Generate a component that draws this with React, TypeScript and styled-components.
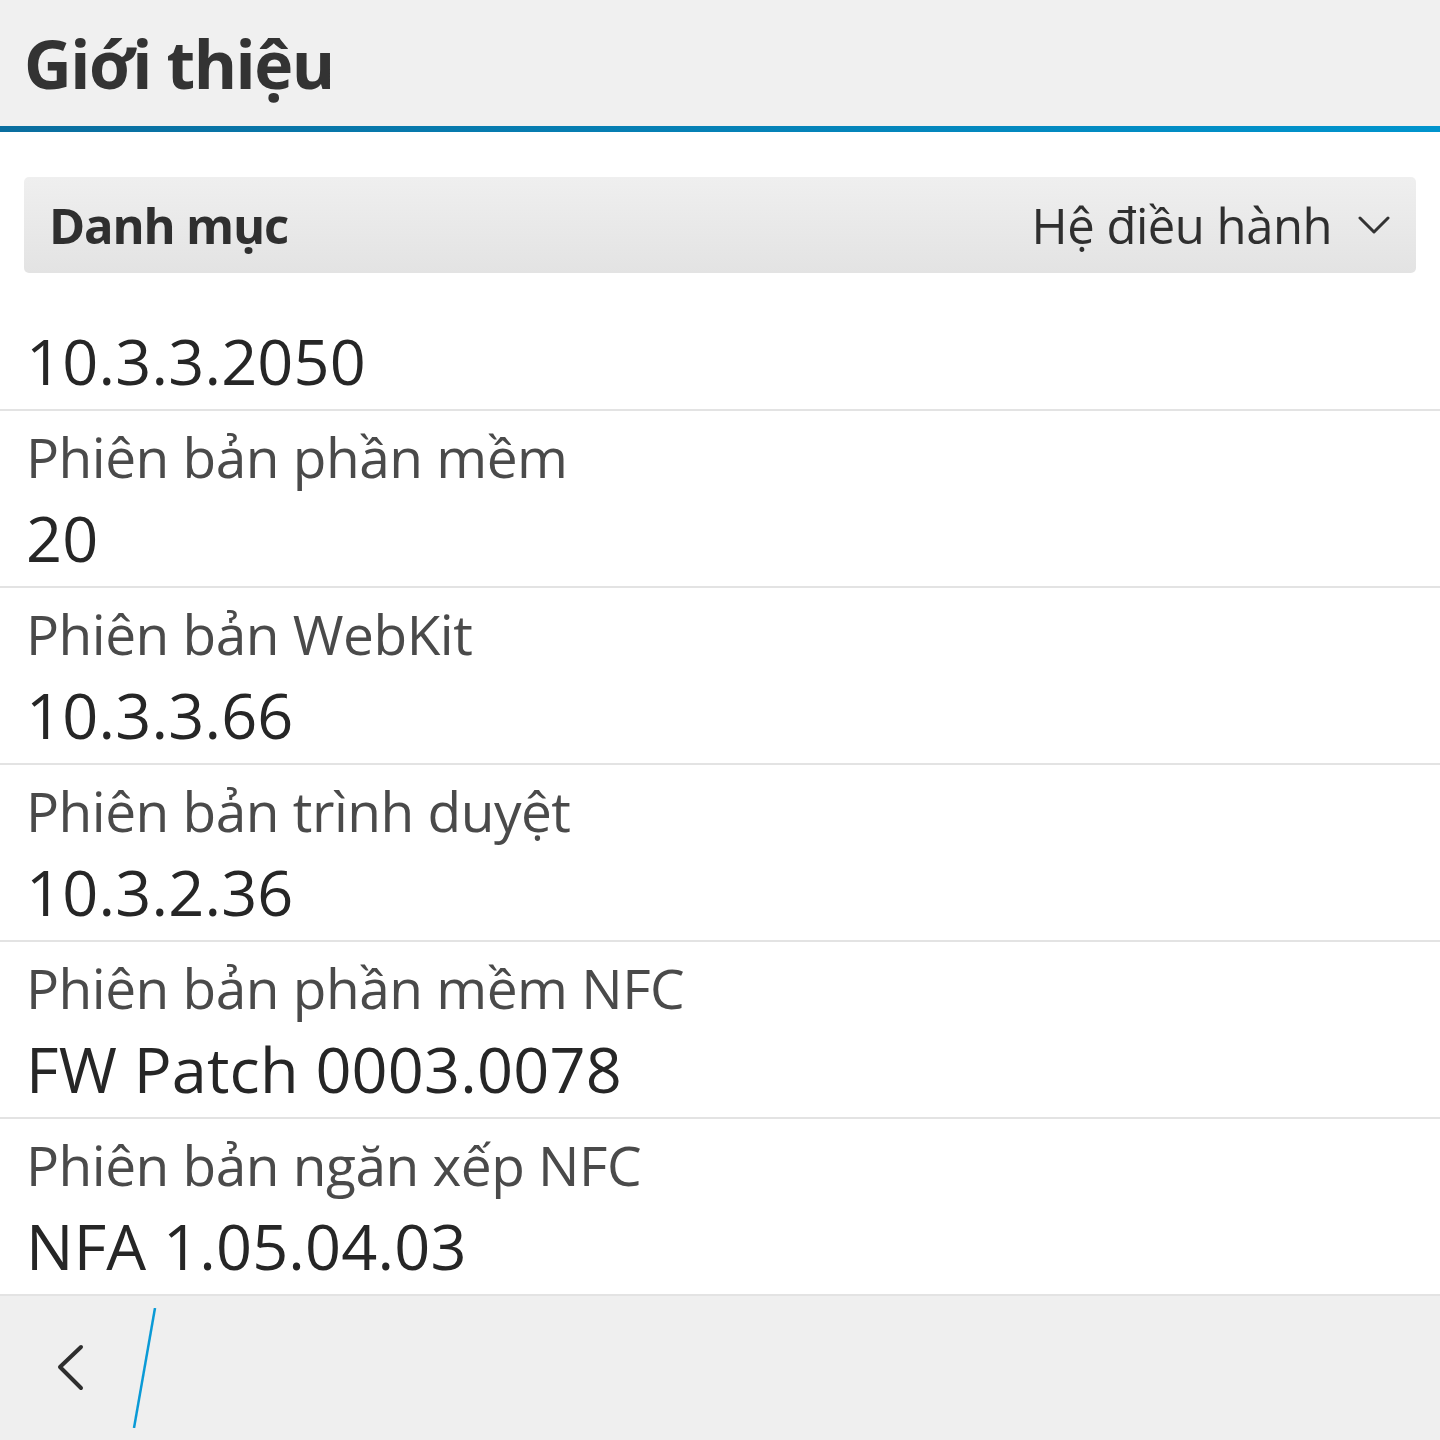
import React from 'react';
import styled, { createGlobalStyle } from 'styled-components';

const GlobalStyle = createGlobalStyle`
  html, body {
    margin: 0;
    padding: 0;
    background: #ffffff;
  }
  body {
    font-family: "Open Sans", "Noto Sans", sans-serif;
  }
`;

const items = [
  { label: 'Phiên bản phần mềm', value: '20' },
  { label: 'Phiên bản WebKit', value: '10.3.3.66' },
  { label: 'Phiên bản trình duyệt', value: '10.3.2.36' },
  { label: 'Phiên bản phần mềm NFC', value: 'FW Patch 0003.0078' },
  { label: 'Phiên bản ngăn xếp NFC', value: 'NFA 1.05.04.03' },
];

const App = () => {
  return (
    <Screen>
      <GlobalStyle />
      <TitleBar>
        <Title>Giới thiệu</Title>
      </TitleBar>
      <AccentLine />
      <CategoryWrap>
        <CategoryBox>
          <CategoryLabel>Danh mục</CategoryLabel>
          <CategoryValue>
            Hệ điều hành
            <svg width="32" height="20" viewBox="0 0 32 20">
              <polyline points="2,3 16,17 30,3" fill="none" stroke="#333" strokeWidth="3" strokeLinecap="round" strokeLinejoin="round" />
            </svg>
          </CategoryValue>
        </CategoryBox>
      </CategoryWrap>
      <Row first>
        <Value>10.3.3.2050</Value>
      </Row>
      {items.map((it) => (
        <Row key={it.label}>
          <Label>{it.label}</Label>
          <Value>{it.value}</Value>
        </Row>
      ))}
      <ActionBar>
        <BackButton>
          <svg width="32" height="48" viewBox="0 0 32 48">
            <polyline points="27,3 6,23 27,44" fill="none" stroke="#2e2e2e" strokeWidth="4" strokeLinecap="round" strokeLinejoin="round" />
          </svg>
        </BackButton>
        <svg width="30" height="120" viewBox="0 0 30 120">
          <line x1="25" y1="0" x2="4" y2="120" stroke="#0a9ad6" strokeWidth="2.5" />
        </svg>
      </ActionBar>
    </Screen>
  );
};

export default App;

const Screen = styled.div`
  width: 1440px;
  height: 1440px;
  display: flex;
  flex-direction: column;
  overflow: hidden;
  background: #ffffff;
`;

const TitleBar = styled.div`
  height: 126px;
  background: #f0f0f0;
  display: flex;
  align-items: center;
  padding: 0 24px;
  box-sizing: border-box;
`;

const Title = styled.h1`
  margin: 0;
  font-size: 66px;
  font-weight: 700;
  color: #333333;
  letter-spacing: -1.5px;
`;

const AccentLine = styled.div`
  height: 6px;
  background: linear-gradient(to right, #0a6e9f, #0094cd);
`;

const CategoryWrap = styled.div`
  padding: 45px 24px 0;
`;

const CategoryBox = styled.div`
  height: 96px;
  border-radius: 5px;
  background: linear-gradient(to bottom, #efefef, #e3e3e3);
  display: flex;
  align-items: center;
  justify-content: space-between;
  padding: 0 26px 0 25px;
  box-sizing: border-box;
`;

const CategoryLabel = styled.span`
  font-size: 49px;
  font-weight: 700;
  color: #2f2f2f;
  letter-spacing: -1.2px;
`;

const CategoryValue = styled.span`
  display: flex;
  align-items: center;
  gap: 26px;
  font-size: 49px;
  color: #2f2f2f;
  letter-spacing: -0.5px;
`;

const Row = styled.div<{ first?: boolean }>`
  padding: ${(p) => (p.first ? '45px' : '8px')} 26px 5px;
  border-bottom: 2px solid #e3e3e3;
  display: flex;
  flex-direction: column;
`;

const Label = styled.div`
  font-size: 55px;
  line-height: 76px;
  color: #4a4a4a;
  letter-spacing: -0.5px;
  white-space: nowrap;
`;

const Value = styled.div`
  font-size: 63px;
  line-height: 86px;
  color: #262626;
  letter-spacing: 0.2px;
  white-space: nowrap;
`;

const ActionBar = styled.div`
  flex: 1;
  background: #efefef;
  display: flex;
  align-items: center;
  padding-left: 54px;
`;

const BackButton = styled.div`
  width: 76px;
  display: flex;
  align-items: center;
`;
